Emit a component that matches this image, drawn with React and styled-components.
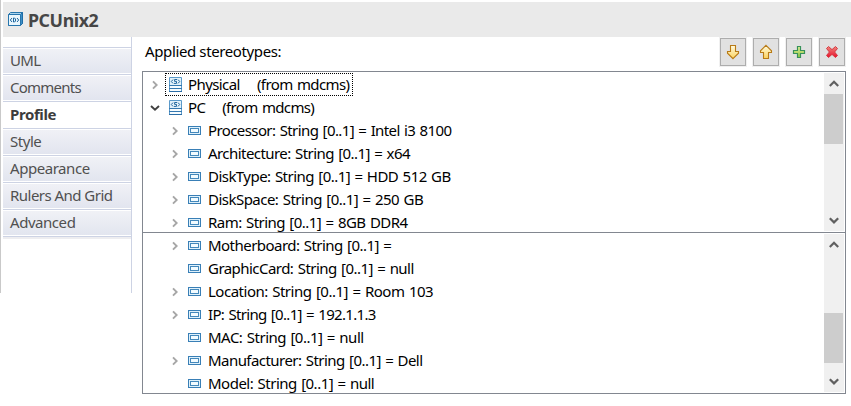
import React from "react";
import styled, { createGlobalStyle } from "styled-components";

const Global = createGlobalStyle`
  html, body { margin: 0; padding: 0; background: #fff; overflow: hidden; }
  * { box-sizing: border-box; }
  body { font-family: "Noto Sans", "Open Sans", sans-serif; font-size: 15px; color: #000; }
  svg { display: block; flex: none; }
`;

const Page = styled.div`
  width: 851px;
  height: 406px;
  display: flex;
  flex-direction: column;
  padding-top: 2px;
  background: linear-gradient(#c9c9c9, #c9c9c9) 0 0 / 1px 293px no-repeat #fff;
`;

const Header = styled.header`
  height: 35px;
  margin-left: 3px;
  padding-left: 5px;
  display: flex;
  align-items: center;
  gap: 5px;
  background: #eaeaea;
`;

const DeviceSlot = styled.span`
  padding-bottom: 1px;
`;

const Title = styled.h1`
  margin: 0;
  font-size: 17.8px;
  line-height: 24px;
  font-weight: 700;
  color: #464646;
  white-space: pre;
  letter-spacing: ${(p) => p.$track}px;
`;

const Body = styled.div`
  display: flex;
  align-items: flex-start;
  padding-left: 3px;
`;

const Sidebar = styled.nav`
  width: 129px;
  height: 256px;
  padding-top: 10px;
  border-right: 1px solid #cdd3e4;
`;

const TabList = styled.div`
  border-bottom: 1px solid #cdd3e4;
  box-shadow: 0 2px 0 #ededf0;
`;

const Tab = styled.div`
  height: 27px;
  padding: 1px 0;
  border-top: 1px solid #cdd3e4;
  background: #fff;
`;

const TabFace = styled.div`
  height: 24px;
  padding-left: 7px;
  line-height: 23px;
  white-space: pre;
  font-weight: ${(p) => (p.$active ? 700 : 400)};
  letter-spacing: ${(p) => p.$track}px;
  color: ${(p) => (p.$active ? "#3c3c3c" : "#505050")};
  background: ${(p) => (p.$active ? "#fff" : "linear-gradient(#f0f1f6, #e2e5ef)")};
`;

const Main = styled.main`
  width: 704px;
  margin-left: 10px;
`;

const Toolbar = styled.div`
  height: 34px;
  display: flex;
  justify-content: space-between;
  align-items: flex-start;
  padding-left: 3px;
`;

const Caption = styled.div`
  padding-top: 3px;
  line-height: 22px;
  white-space: pre;
  letter-spacing: ${(p) => p.$track}px;
`;

const Buttons = styled.div`
  display: flex;
  gap: 5px;
`;

const Button = styled.button`
  width: 28px;
  height: 30px;
  padding: 0;
  border: 1px solid #f0f0f0;
  background: #e1e1e1;
  box-shadow: inset 0 0 0 1px #adadad;
  display: flex;
  align-items: center;
  justify-content: center;
`;

const Pane = styled.section`
  height: ${(p) => p.$height}px;
  display: flex;
  justify-content: space-between;
  overflow: hidden;
  border: 1px solid #828790;
  border-top-width: ${(p) => (p.$joined ? 0 : 1)}px;
  padding: 1px 1px 1px 0;
`;

const Rows = styled.div`
  display: flex;
  flex-direction: column;
  align-items: flex-start;
`;

const Row = styled.div`
  height: 23px;
  flex: none;
  display: flex;
  align-items: center;
  padding-left: ${(p) => 7 + p.$depth * 20}px;
`;

const Expander = styled.span`
  width: 10px;
  height: 23px;
  display: flex;
  align-items: center;
  justify-content: center;
`;

const Item = styled.span`
  height: 23px;
  margin-left: 5px;
  padding: 0 4px 0 ${(p) => (p.$small ? 3 : 4)}px;
  display: flex;
  align-items: center;
  gap: ${(p) => (p.$small ? 7 : 5)}px;
  outline: ${(p) => (p.$focused ? "1px dotted #000" : "none")};
  outline-offset: -1px;
`;

const Label = styled.span`
  line-height: 23px;
  white-space: pre;
  word-spacing: 1px;
  letter-spacing: ${(p) => p.$track}px;
`;

const Scrollbar = styled.div`
  width: 20px;
  flex: none;
  display: flex;
  flex-direction: column;
  background: #f0f0f0;
`;

const ScrollArrow = styled.div`
  height: 21px;
  width: 19px;
  display: flex;
  align-items: center;
  justify-content: center;
`;

const Track = styled.div`
  flex: 1;
  padding-top: ${(p) => p.$offset}px;
`;

const Thumb = styled.div`
  width: 19px;
  height: 50px;
  background: #cdcdcd;
`;

const Chevron = ({ dir, color = "#606060" }) => (
  <svg width="10" height="8" viewBox="0 0 10 8">
    <path d={dir === "up" ? "M0.8 6 5 1.8 9.2 6" : "M0.8 1.2 5 5.4 9.2 1.2"} fill="none" stroke={color} strokeWidth="2.2" />
  </svg>
);

const Collapsed = () => (
  <svg width="6" height="10" viewBox="0 0 6 10">
    <path d="M1 1.3 4.7 5 1 8.7" fill="none" stroke="#a6a6a6" strokeWidth="1.9" />
  </svg>
);

const Expanded = () => (
  <svg width="10" height="6" viewBox="0 0 10 6">
    <path d="M1 1 5 4.7 9 1" fill="none" stroke="#404040" strokeWidth="1.9" />
  </svg>
);

const DeviceIcon = () => (
  <svg width="15" height="14" viewBox="0 0 15 14">
    <path d="M.5 2.5 2.5.5h12v11L12.5 13.5H.5z" fill="#a9d3ec" stroke="#2675ad" />
    <path d="M12.5 2.5 14.5.5v11L12.5 13.5z" fill="#3f8fc5" stroke="#1f6da6" />
    <path d="M.5 2.5h12v11H.5z" fill="#e9f6fd" stroke="#2675ad" />
    <path d="M4 6 2.3 8 4 10M9 6l1.7 2L9 10M5.5 6h1l1 1v2l-1 1h-1z" fill="none" stroke="#1d669e" />
  </svg>
);

const StereotypeIcon = () => (
  <svg width="14" height="16" viewBox="0 0 14 16">
    <path d="M.5.5h12v14H.5z" fill="#e2f2fb" stroke="#5b9aca" />
    <path d="M1 9h11v2H1zM1 12h11v2H1z" fill="#f6fcff" />
    <path d="M0 8.5h13M0 11.5h13" stroke="#3478b0" />
    <path d="M0 14.5h13" stroke="#2b6da6" />
    <path d="M4 2.6 2.3 4.5 4 6.4M9 2.6l1.7 1.9L9 6.4M8 2.5H5.6v1.9h1.9v2H5" fill="none" stroke="#24689f" />
  </svg>
);

const SlotIcon = () => (
  <svg width="13" height="9" viewBox="0 0 13 9" shapeRendering="crispEdges">
    <path d="M.5.5h12v8H.5z" fill="#dff1fb" stroke="#397fb6" />
    <path d="M2.5 2.5h8v4h-8z" fill="#f2fbff" stroke="#4488bb" />
  </svg>
);

const ArrowIcon = ({ up }) => (
  <svg width="14" height="16" viewBox="0 0 14 16">
    <defs>
      <linearGradient id={up ? "goldUp" : "goldDown"} x1="0" y1="0" x2="0" y2="1">
        <stop offset="0" stopColor="#fffbe0" />
        <stop offset="1" stopColor="#fbd25c" />
      </linearGradient>
    </defs>
    <path
      d={up ? "M7 1.3 12.5 6.8V8.5H9.5V14.5H4.5V8.5H1.5V6.8z" : "M7 14.7 12.5 9.2V7.5H9.5V1.5H4.5V7.5H1.5V9.2z"}
      fill={up ? "url(#goldUp)" : "url(#goldDown)"}
      stroke="#b87a16"
      strokeWidth="1.1"
    />
  </svg>
);

const PlusIcon = () => (
  <svg width="14" height="14" viewBox="0 0 14 14">
    <defs>
      <linearGradient id="leaf" x1="0" y1="0" x2="0" y2="1">
        <stop offset="0" stopColor="#e4ef9a" />
        <stop offset="1" stopColor="#8cc63f" />
      </linearGradient>
    </defs>
    <path d="M5.5 1.5h3v4h4v3h-4v4h-3v-4h-4v-3h4z" fill="url(#leaf)" stroke="#37915a" strokeWidth="1.2" />
  </svg>
);

const CrossIcon = () => (
  <svg width="14" height="14" viewBox="0 0 14 14">
    <defs>
      <linearGradient id="ruby" x1="0" y1="0" x2="0" y2="1">
        <stop offset="0" stopColor="#f0857c" />
        <stop offset="1" stopColor="#e8112d" />
      </linearGradient>
    </defs>
    <path
      d="M3.5 1.5 7 4.6l3.5-3.1 2 2L9.6 7l2.9 3.5-2 2L7 9.4l-3.5 3.1-2-2L4.4 7 1.5 3.5z"
      fill="url(#ruby)"
      stroke="#d43a42"
      strokeLinejoin="round"
    />
  </svg>
);

const tabs = [
  { name: "UML", track: -0.7 },
  { name: "Comments", track: -0.75 },
  { name: "Profile", track: -0.4, active: true },
  { name: "Style", track: -0.45 },
  { name: "Appearance", track: -0.45 },
  { name: "Rulers And Grid", track: -0.53 },
  { name: "Advanced", track: -0.45 },
];

const upperRows = [
  { text: "Physical    (from mdcms)", track: -0.6, state: "collapsed", depth: 0, focused: true },
  { text: "PC    (from mdcms)", track: -0.65, state: "expanded", depth: 0 },
  { text: "Processor: String [0..1] = Intel i3 8100", track: -0.6, state: "collapsed", depth: 1 },
  { text: "Architecture: String [0..1] = x64", track: -0.56, state: "collapsed", depth: 1 },
  { text: "DiskType: String [0..1] = HDD 512 GB", track: -0.54, state: "collapsed", depth: 1 },
  { text: "DiskSpace: String [0..1] = 250 GB", track: -0.52, state: "collapsed", depth: 1 },
  { text: "Ram: String [0..1] = 8GB DDR4", track: -0.54, state: "collapsed", depth: 1 },
];

const lowerRows = [
  { text: "Motherboard: String [0..1] =", track: -0.54, state: "collapsed", depth: 1 },
  { text: "GraphicCard: String [0..1] = null", track: -0.54, depth: 1 },
  { text: "Location: String [0..1] = Room 103", track: -0.49, state: "collapsed", depth: 1 },
  { text: "IP: String [0..1] = 192.1.1.3", track: -0.67, state: "collapsed", depth: 1 },
  { text: "MAC: String [0..1] = null", track: -0.5, depth: 1 },
  { text: "Manufacturer: String [0..1] = Dell", track: -0.55, state: "collapsed", depth: 1 },
  { text: "Model: String [0..1] = null", track: -0.51, depth: 1 },
];

const TreePane = ({ rows, height, joined, offset }) => (
  <Pane $height={height} $joined={joined}>
    <Rows>
      {rows.map((r) => (
        <Row key={r.text} $depth={r.depth}>
          <Expander>
            {r.state === "collapsed" && <Collapsed />}
            {r.state === "expanded" && <Expanded />}
          </Expander>
          <Item $focused={r.focused} $small={r.depth === 1}>
            {r.depth === 0 ? <StereotypeIcon /> : <SlotIcon />}
            <Label $track={r.track}>{r.text}</Label>
          </Item>
        </Row>
      ))}
    </Rows>
    <Scrollbar>
      <ScrollArrow><Chevron dir="up" /></ScrollArrow>
      <Track $offset={offset}><Thumb /></Track>
      <ScrollArrow><Chevron dir="down" /></ScrollArrow>
    </Scrollbar>
  </Pane>
);

export default function App() {
  return (
    <Page>
      <Global />
      <Header>
        <DeviceSlot><DeviceIcon /></DeviceSlot>
        <Title $track={-0.42}>PCUnix2</Title>
      </Header>
      <Body>
        <Sidebar>
          <TabList>
            {tabs.map((t) => (
              <Tab key={t.name}>
                <TabFace $active={t.active} $track={t.track}>{t.name}</TabFace>
              </Tab>
            ))}
          </TabList>
        </Sidebar>
        <Main>
          <Toolbar>
            <Caption $track={-0.38}>Applied stereotypes:</Caption>
            <Buttons>
              <Button><ArrowIcon /></Button>
              <Button><ArrowIcon up /></Button>
              <Button><PlusIcon /></Button>
              <Button><CrossIcon /></Button>
            </Buttons>
          </Toolbar>
          <TreePane rows={upperRows} height={162} offset={0} />
          <TreePane rows={lowerRows} height={161} offset={58} joined />
        </Main>
      </Body>
    </Page>
  );
}
